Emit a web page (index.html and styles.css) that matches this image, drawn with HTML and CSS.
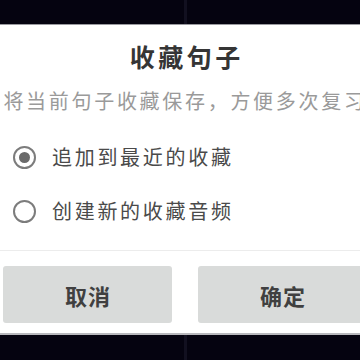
FILE: index.html
```html
<!DOCTYPE html>
<html lang="zh">
<head>
<meta charset="utf-8">
<link rel="stylesheet" href="styles.css">
</head>
<body>
<div class="screen">
  <div class="bar bar-top"><span class="seam"></span></div>
  <div class="dialog">
    <div class="title">收藏句子</div>
    <div class="subtitle">将当前句子收藏保存，方便多次复习</div>
    <div class="options">
      <div class="option">
        <span class="radio checked"><span class="dot"></span></span>
        <span class="label">追加到最近的收藏</span>
      </div>
      <div class="option">
        <span class="radio"></span>
        <span class="label">创建新的收藏音频</span>
      </div>
    </div>
    <div class="sep"></div>
    <div class="buttons">
      <div class="btn">取消</div>
      <div class="btn">确定</div>
    </div>
  </div>
  <div class="bar bar-bottom"><span class="seam"></span></div>
</div>
</body>
</html>
```
FILE: styles.css
```css
html, body {
  margin: 0;
  padding: 0;
  width: 360px;
  height: 360px;
  overflow: hidden;
  background: #050310;
}
.screen {
  width: 370px;
  height: 360px;
  display: flex;
  flex-direction: column;
  font-family: "Noto Sans CJK SC", "Noto Sans", sans-serif;
}
.bar {
  background: #050310;
  display: flex;
  justify-content: center;
}
.bar-top {
  height: 24px;
  border-bottom: 1px solid #9a9aa0;
}
.bar-bottom {
  flex: 1;
  border-top: 2px solid #b8b8bc;
}
.seam {
  width: 3px;
  background: #121020;
}
.dialog {
  background: #ffffff;
  height: 308px;
  display: flex;
  flex-direction: column;
}
.title {
  margin-top: 16px;
  height: 30px;
  line-height: 30px;
  font-size: 25px;
  font-weight: 700;
  color: #353535;
  text-align: center;
  letter-spacing: 3.5px;
  text-indent: 3.5px;
}
.subtitle {
  margin-top: 18px;
  height: 24px;
  line-height: 24px;
  font-size: 20px;
  color: #9a9a9a;
  text-align: center;
  white-space: nowrap;
  letter-spacing: 2.7px;
}
.options {
  margin-top: 17px;
  display: flex;
  flex-direction: column;
}
.option {
  height: 54px;
  display: flex;
  align-items: center;
  padding-left: 13px;
}
.radio {
  width: 23px;
  height: 23px;
  box-sizing: border-box;
  border: 2.5px solid #7c7c7c;
  border-radius: 50%;
  display: flex;
  align-items: center;
  justify-content: center;
}
.radio .dot {
  width: 11px;
  height: 11px;
  border-radius: 50%;
  background: #6a6a6a;
}
.label {
  margin-left: 16px;
  font-size: 20px;
  line-height: 24px;
  color: #4a4a4a;
  letter-spacing: 2.7px;
}
.sep {
  margin-top: 12px;
  height: 1px;
  background: #ececec;
}
.buttons {
  margin-top: 15px;
  padding: 0 3px;
  display: flex;
  gap: 26px;
}
.btn {
  flex: 1;
  height: 57px;
  background: #d9dbda;
  border-radius: 3px;
  display: flex;
  align-items: center;
  justify-content: center;
  font-size: 22px;
  font-weight: 700;
  color: #404040;
  letter-spacing: 1px;
  text-indent: 1px;
}
```
